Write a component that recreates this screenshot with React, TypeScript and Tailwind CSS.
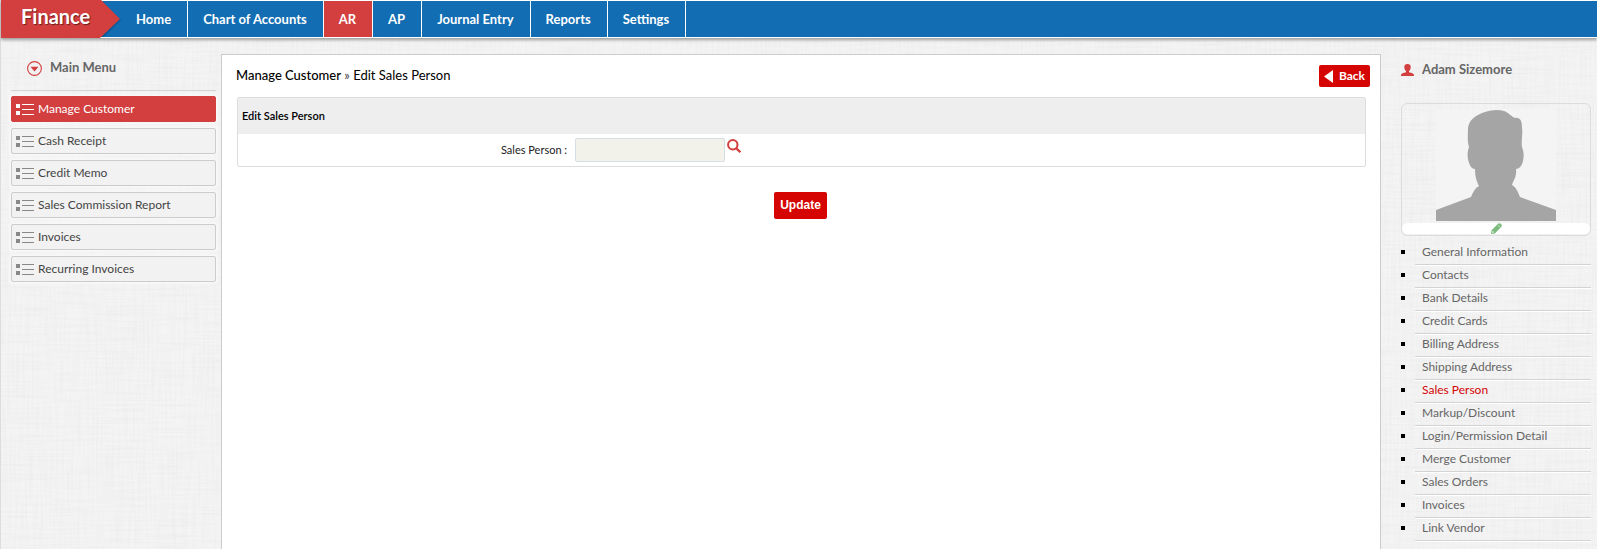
import React from "react";

const navItems = ["Home", "Chart of Accounts", "AR", "AP", "Journal Entry", "Reports", "Settings"];

const menuItems = [
  "Manage Customer",
  "Cash Receipt",
  "Credit Memo",
  "Sales Commission Report",
  "Invoices",
  "Recurring Invoices",
];

const customerLinks = [
  "General Information",
  "Contacts",
  "Bank Details",
  "Credit Cards",
  "Billing Address",
  "Shipping Address",
  "Sales Person",
  "Markup/Discount",
  "Login/Permission Detail",
  "Merge Customer",
  "Sales Orders",
  "Invoices",
  "Link Vendor",
];

function LinenTexture() {
  return (
    <svg className="absolute inset-0 -z-10 h-full w-full" aria-hidden="true">
      <filter id="linen-h" x="0" y="0" width="100%" height="100%">
        <feTurbulence type="fractalNoise" baseFrequency="0.02 0.45" numOctaves="2" seed="4" />
        <feColorMatrix values="0 0 0 0 0.8  0 0 0 0 0.8  0 0 0 0 0.8  0.9 0 0 0 -0.36" />
      </filter>
      <filter id="linen-v" x="0" y="0" width="100%" height="100%">
        <feTurbulence type="fractalNoise" baseFrequency="0.45 0.02" numOctaves="2" seed="9" />
        <feColorMatrix values="0 0 0 0 0.8  0 0 0 0 0.8  0 0 0 0 0.8  0.9 0 0 0 -0.36" />
      </filter>
      <rect width="100%" height="100%" fill="#f4f4f4" />
      <rect width="100%" height="100%" filter="url(#linen-h)" />
      <rect width="100%" height="100%" filter="url(#linen-v)" />
    </svg>
  );
}

function ListIcon() {
  return (
    <svg width="18" height="12" viewBox="0 0 18 12" shapeRendering="crispEdges" fill="currentColor" aria-hidden="true">
      <rect x="0" y="1" width="4" height="4" />
      <rect x="0" y="8" width="4" height="4" />
      <rect x="6" y="1" width="12" height="1" />
      <rect x="6" y="6" width="12" height="1" />
      <rect x="6" y="11" width="12" height="1" />
    </svg>
  );
}

function Silhouette() {
  return (
    <svg width="120" height="112" viewBox="0 0 120 112" role="img" aria-label="Profile picture">
      <rect width="120" height="112" fill="#f4f4f4" />
      <path
        fill="#a5a5a5"
        d="M0 112V101L35 88C37 83 39 79 43 77C41 73 39 68 39 60C35 60 33 55 32 50C31 45 32 41 33 38C31 31 32 25 32 19C33 11 39 7 46 4C54 1 62 0 68 2C73 4 76 8 79 9C84 8 86 12 86 18C87 25 85 32 86 38C88 43 88 47 87 52C86 57 83 60 80 60C81 68 77 72 76 76C80 78 82 83 84 88L120 101V112Z"
      />
    </svg>
  );
}

export default function App() {
  return (
    <div className="relative isolate flex min-h-screen flex-col border-l border-[#dddddd] bg-[#f2f2f2] font-['Lato',sans-serif] text-[12px] text-black">
      <LinenTexture />
      <header className="flex h-[38px] border-y border-white bg-[#126db3] shadow-[0_2px_3px_rgba(0,0,0,0.35)]">
        <div className="-my-px flex h-[38px]">
          <div className="flex w-[98px] items-center bg-[#d33e3e] pb-[6px] pl-5 text-[20px] font-bold text-white [text-shadow:1px_1px_1px_rgba(0,0,0,0.5)]">
            Finance
          </div>
          <svg width="22" height="38" viewBox="0 0 22 38" aria-hidden="true">
            <path d="M2 0L22 20L5 37H1Z" fill="#0b4f85" opacity="0.6" />
            <path d="M0 0H2L21 19L1 38H0Z" fill="#d33e3e" />
          </svg>
        </div>
        <nav className="flex">
          {navItems.map((item) => (
            <a
              key={item}
              href="#"
              className={
                "flex items-center border-r border-white pt-px pr-4 pl-[15px] text-[13px] font-bold text-white " +
                (item === "AR" ? "bg-[#d33e3e]" : "")
              }
            >
              {item}
            </a>
          ))}
        </nav>
      </header>

      <div className="flex flex-1 pt-4">
        <aside className="w-[220px] shrink-0 pr-[5px] pl-[10px]">
          <h2 className="flex h-[37px] items-start gap-2 border-b border-[#d3d3d3] pt-1 pl-4 text-[13px] font-bold text-[#666666]">
            <svg className="mt-[3px]" width="15" height="15" viewBox="0 0 15 15" aria-hidden="true">
              <circle cx="7.5" cy="7.5" r="6.9" fill="none" stroke="#d33e3e" strokeWidth="1.1" />
              <path d="M3.5 5.7H11.5L7.5 10.5Z" fill="#d33e3e" />
            </svg>
            <span className="leading-[18px]">Main Menu</span>
          </h2>
          <ul className="mt-[5px] flex flex-col gap-[6px]">
            {menuItems.map((item, i) => (
              <li key={item}>
                <a
                  href="#"
                  className={
                    "flex h-[26px] items-center gap-1 rounded-xs border pl-1 shadow-[0_0_3px_2px_#f8f8f8] " +
                    (i === 0
                      ? "border-[#d33e3e] bg-[#d33e3e] text-white"
                      : "border-[#cccccc] bg-[#f2f2f2] text-[#444444]")
                  }
                >
                  <span className={i === 0 ? "text-white" : "text-[#888888]"}>
                    <ListIcon />
                  </span>
                  {item}
                </a>
              </li>
            ))}
          </ul>
        </aside>

        <main className="flex-1 border border-b-0 border-[#cccccc] bg-white pt-[10px] pr-[10px] pl-[15px]">
          <div className="flex h-[22px] items-center justify-between">
            <h1 className="-ml-px text-[13px]">
              <a href="#" className="font-medium">Manage Customer</a>
              <span className="text-[#444444]"> » </span>
              Edit Sales Person
            </h1>
            <a href="#" className="flex h-[22px] items-center gap-[6px] rounded-xs bg-[#d40503] px-[5px] font-bold text-white">
              <svg width="9" height="13" viewBox="0 0 9 13" aria-hidden="true">
                <path d="M9 0V13L0 6.5Z" fill="#ffffff" />
              </svg>
              Back
            </a>
          </div>

          <form className="mt-[10px] mr-1">
            <section className="rounded-xs border border-[#dddddd]">
              <h2 className="flex h-9 items-center bg-[#eeeeee] pl-1 text-[11px] font-semibold">Edit Sales Person</h2>
              <div className="flex h-8 items-start pt-1">
                <label htmlFor="sales-person" className="w-[30%] pr-[9px] text-right text-[11px] leading-6 text-[#222222]">
                  Sales Person :
                </label>
                <input
                  id="sales-person"
                  type="text"
                  readOnly
                  className="-ml-px h-6 w-[150px] rounded-xs border border-[#d5dde5] bg-[#f2f2ea] px-1 outline-none"
                />
                <button type="button" aria-label="Search sales person" className="mt-px ml-[2px]">
                  <svg width="14" height="14" viewBox="0 0 14 14" fill="none" stroke="#d33e3e" aria-hidden="true">
                    <circle cx="5.8" cy="5.8" r="4.7" strokeWidth="2" />
                    <path d="M9.2 9.2L13.3 13.2" strokeWidth="2.3" />
                  </svg>
                </button>
              </div>
            </section>
            <div className="mt-[25px] flex justify-center pr-[2px]">
              <button
                type="submit"
                className="h-[27px] rounded-xs bg-[#d40503] px-[6px] pb-[2px] font-['Liberation_Sans',sans-serif] text-[12px] font-bold text-white"
              >
                Update
              </button>
            </div>
          </form>
        </main>

        <aside className="w-[216px] shrink-0 pr-[6px] pl-5">
          <h2 className="flex h-[49px] items-start gap-2 pt-[6px] text-[13px] font-bold text-[#666666]">
            <svg className="mt-1" width="13" height="12" viewBox="0 0 13 12" fill="#d33e3e" aria-hidden="true">
              <path d="M6.5 0C8.6 0 9.8 1.2 9.7 3.2C9.6 5 9 6.3 8 7V8.2L11.5 9.3C12.6 9.8 13 10.5 13 12H0C0 10.5 .4 9.8 1.5 9.3L5 8.2V7C4 6.3 3.4 5 3.3 3.2C3.2 1.2 4.4 0 6.5 0Z" />
            </svg>
            <span className="leading-[18px]">Adam Sizemore</span>
          </h2>
          <div className="flex h-[133px] flex-col items-center rounded-md border border-[#dcdcdc] pt-[5px]">
            <Silhouette />
            <button type="button" aria-label="Edit picture" className="mt-[2px] flex h-[11px] w-full items-center justify-center rounded-md bg-white">
              <svg width="11" height="11" viewBox="0 0 11 11" aria-hidden="true">
                <path d="M0 11L.6 7.2L7 .8C8 -.1 9 0 10 .9C11 1.9 11.2 3 10.2 4L3.8 10.4Z" fill="#7dba7d" />
                <path d="M7 2.4L8.7 4.1" stroke="#ffffff" strokeWidth=".8" />
                <circle cx="1.9" cy="9.1" r=".8" fill="#ffffff" />
              </svg>
            </button>
          </div>
          <ul className="mt-[6px]">
            {customerLinks.map((item) => (
              <li key={item} className="flex h-[23px] items-center gap-[10px]">
                <span className="mb-1 h-1 w-1 bg-black" />
                <a
                  href="#"
                  className={
                    "flex h-[23px] flex-1 items-center border-b border-[#d3d3d3] pb-[3px] pl-[7px] shadow-[0_1px_0_#ffffff] " +
                    (item === "Sales Person" ? "text-[#d40503]" : "text-[#666666]")
                  }
                >
                  {item}
                </a>
              </li>
            ))}
          </ul>
        </aside>
      </div>
    </div>
  );
}
